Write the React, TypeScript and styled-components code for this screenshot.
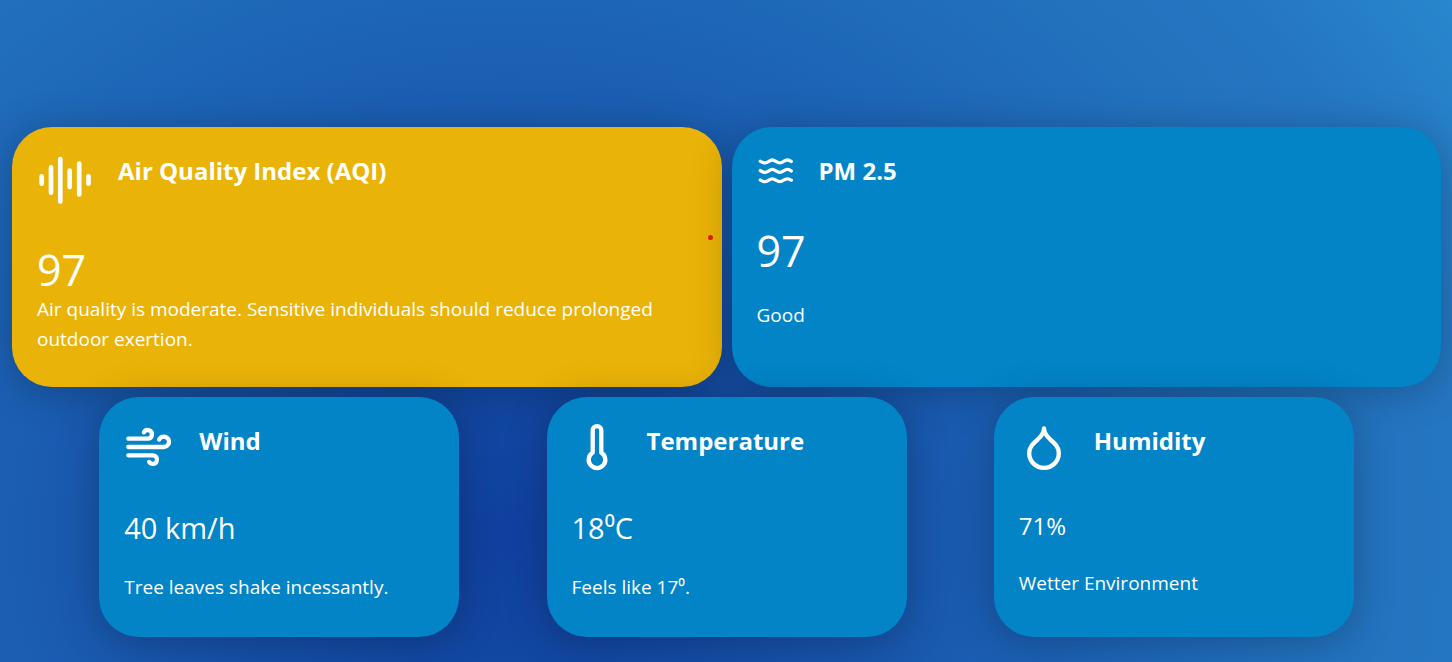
import React from "react";
import styled, { createGlobalStyle } from "styled-components";

const GlobalStyle = createGlobalStyle`
  * { box-sizing: border-box; }
  body { margin: 0; font-family: "Open Sans", "Noto Sans", sans-serif; color: #fff; }
  h2, p { margin: 0; }
`;

const Page = styled.main`
  min-height: 100vh;
  padding: 127px 11px 25px 12px;
  display: flex;
  flex-direction: column;
  gap: 10px;
  background: radial-gradient(1150px 1000px at 35% 81%, #1040a0 0, #1247a2 13%, #1c61b4 48%, #2271bd 70%, #2576c2 83%, #2888ce 99%);
`;

const WideRow = styled.div`
  display: grid;
  grid-template-columns: 1fr 1fr;
  gap: 10px;
`;

const SmallRow = styled.div`
  display: flex;
  justify-content: space-evenly;
`;

const Card = styled.section<{ $tone?: string; $small?: boolean }>`
  position: relative;
  width: ${(p) => (p.$small ? "360px" : "auto")};
  min-height: ${(p) => (p.$small ? 240 : 260)}px;
  padding: 25px;
  border-radius: 40px;
  background: ${(p) => p.$tone ?? "#0284c7"};
  box-shadow: 0 5px 40px rgba(0, 0, 0, 0.25);
`;

const Head = styled.header<{ $height: number }>`
  display: flex;
  align-items: flex-start;
  gap: 25px;
  height: ${(p) => p.$height}px;
  svg { flex: none; }
`;

const Title = styled.h2`
  font-size: 24px;
  line-height: 38px;
  font-weight: 700;
`;

const Value = styled.p<{ $size: number; $line: number }>`
  font-size: ${(p) => p.$size}px;
  line-height: ${(p) => p.$line}px;
`;

const Note = styled.p<{ $gap?: number }>`
  margin-top: ${(p) => p.$gap ?? 0}px;
  font-size: 19px;
  line-height: 30px;
`;

const Marker = styled.span`
  position: absolute;
  top: 108px;
  right: 9px;
  width: 5px;
  height: 5px;
  border-radius: 50%;
  background: #e81c1c;
`;

const stroke = { fill: "none", stroke: "currentColor", strokeLinecap: "round", strokeLinejoin: "round", "aria-hidden": true } as const;

const BarsIcon = () => (
  <svg width="56" height="56" viewBox="0 0 56 56" strokeWidth="4.7" {...stroke}>
    <path d="M4.7 24.3v7.4M14 15.3v25.4M23.3 7v42.4M32.7 18.6v16.5M42.2 11.6v30.8M51.5 24.3v7.4" />
  </svg>
);

const wave = "c1.600 1.200 3 1.700 4.700 1.700 3.400 0 4.300-2.900 7.300-2.900s4.200 2.900 7.500 2.900 4.300-2.900 7.500-2.900c1.700 0 2.800.500 4 1.500";
const WavesIcon = () => (
  <svg width="37" height="37" viewBox="0 0 37 37" strokeWidth="3.3" {...stroke}>
    <path d={`M3.300 9.200${wave}M3.300 18.600${wave}M3.300 28${wave}`} />
  </svg>
);
const WindIcon = () => (
  <svg width="50" height="50" viewBox="0 0 50 50" strokeWidth="4.3" {...stroke}>
    <path d="M4.300 16.700h19.400a4.300 4.300 0 1 0-3.800-6.400M4.300 25h35.500a5.200 5.200 0 1 0-4.700-7.400M4.300 33.300h24.400a4.300 4.300 0 1 1-3.600 6.600" />
  </svg>
);
const ThermometerIcon = () => (
  <svg width="50" height="50" viewBox="0 0 50 50" strokeWidth="4.3" {...stroke}>
    <path d="M20.700 30.700V8.400a4.300 4.300 0 0 1 8.600 0v22.300a8.300 8.300 0 1 1-8.600 0Z" />
  </svg>
);
const DropIcon = () => (
  <svg width="50" height="50" viewBox="0 0 50 50" strokeWidth="4.3" {...stroke}>
    <path d="M25 6.300c0 4-2.500 7.800-6.300 11.200C14 21.500 10.200 25 10.200 31.300a14.800 14.600 0 0 0 29.600 0c0-6.300-3.800-9.800-8.500-13.800C27.500 14.100 25 10.300 25 6.300Z" />
  </svg>
);

export default function App() {
  return (
    <>
      <GlobalStyle />
      <Page>
        <WideRow>
          <Card $tone="#eab308">
            <Head $height={94}><BarsIcon /><Title>Air Quality Index (AQI)</Title></Head>
            <Value $size={43} $line={48}>97</Value>
            <Note>Air quality is moderate. Sensitive individuals should reduce prolonged outdoor exertion.</Note>
            <Marker />
          </Card>
          <Card>
            <Head $height={75}><WavesIcon /><Title>PM 2.5</Title></Head>
            <Value $size={43} $line={48}>97</Value>
            <Note $gap={25}>Good</Note>
          </Card>
        </WideRow>
        <SmallRow>
          <Card $small>
            <Head $height={87}><WindIcon /><Title>Wind</Title></Head>
            <Value $size={29} $line={38}>40 km/h</Value>
            <Note $gap={25}>Tree leaves shake incessantly.</Note>
          </Card>
          <Card $small>
            <Head $height={87}><ThermometerIcon /><Title>Temperature</Title></Head>
            <Value $size={29} $line={38}>18⁰C</Value>
            <Note $gap={25}>Feels like 17⁰.</Note>
          </Card>
          <Card $small>
            <Head $height={87}><DropIcon /><Title>Humidity</Title></Head>
            <Value $size={24} $line={34}>71%</Value>
            <Note $gap={25}>Wetter Environment</Note>
          </Card>
        </SmallRow>
      </Page>
    </>
  );
}
